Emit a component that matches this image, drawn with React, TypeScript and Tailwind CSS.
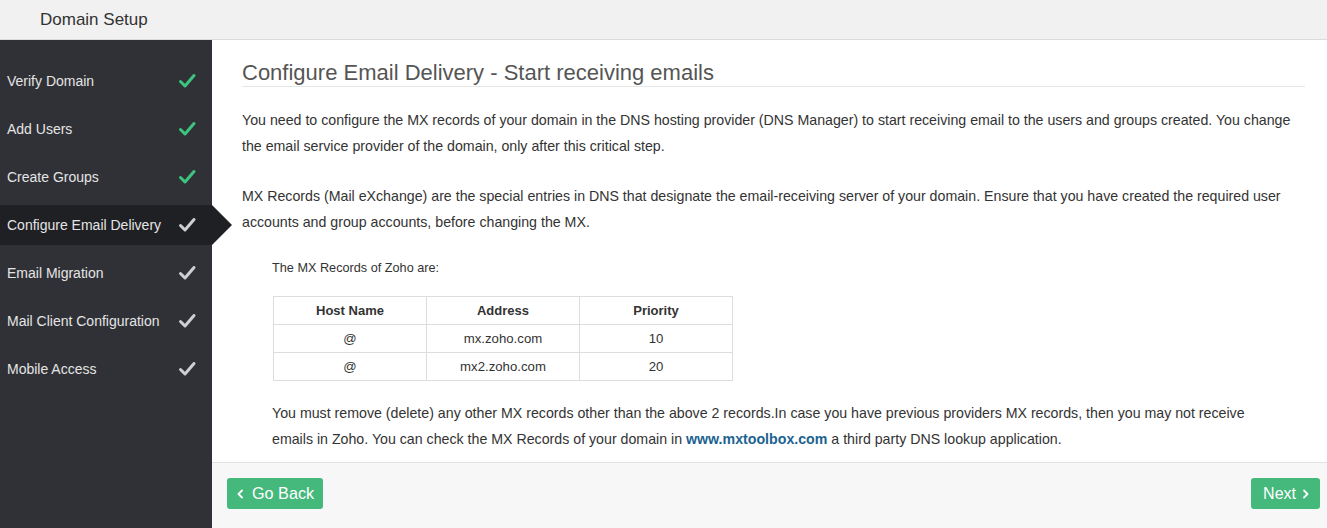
import React from "react"

const steps = [
    { name: 'Verify Domain', done: true },
    { name: 'Add Users', done: true },
    { name: 'Create Groups', done: true },
    { name: 'Configure Email Delivery', done: false, active: true },
    { name: 'Email Migration', done: false },
    { name: 'Mail Client Configuration', done: false },
    { name: 'Mobile Access', done: false },
]

const records = [
    { host: '@', address: 'mx.zoho.com', priority: '10' },
    { host: '@', address: 'mx2.zoho.com', priority: '20' },
]

const CheckIcon = ({ color }: { color: string }) => (
    <svg width="20" height="20" viewBox="0 0 20 20" fill="none">
        <path d="M3.5 10.5 L8 15 L17 4.5" stroke={color} strokeWidth="3" strokeLinecap="round" strokeLinejoin="round" />
    </svg>
)

const Chevron = ({ dir }: { dir: 'left' | 'right' }) => (
    <svg width="8" height="10" viewBox="0 0 8 10" fill="none">
        <path d={dir === 'left' ? 'M6 1.5 L2.5 5 L6 8.5' : 'M2 1.5 L5.5 5 L2 8.5'} stroke="white" strokeWidth="1.8" strokeLinecap="round" strokeLinejoin="round" />
    </svg>
)

const App = () => {
    return (
        <div className="w-[1327px] h-[528px] flex flex-col overflow-hidden bg-white text-[#333]" style={{ fontFamily: '"Liberation Sans", Arial, sans-serif' }}>
            {/* header */}
            <div className="h-[40px] shrink-0 bg-[#f1f1f1] border-b border-[#dcdcdc] flex items-center pl-[40px]">
                <h1 className="text-[17px] text-[#333]">Domain Setup</h1>
            </div>

            <div className="flex flex-1 min-h-0">
                {/* sidebar */}
                <div className="w-[212px] shrink-0 bg-[#303136] pt-[13px]">
                    {steps.map((step) => (
                        <div key={step.name} className={`relative h-[40px] mt-[8px] flex items-center justify-between pl-[7px] pr-[15px] ${step.active ? 'bg-[#1f2024]' : ''}`}>
                            <span className="text-[14px] text-[#e4e4e4]">{step.name}</span>
                            <CheckIcon color={step.done ? '#3cc47c' : '#cfcfd1'} />
                            {step.active && (
                                <span className="absolute left-full top-0 w-0 h-0 border-t-[20px] border-b-[20px] border-l-[20px] border-t-transparent border-b-transparent border-l-[#1f2024]" />
                            )}
                        </div>
                    ))}
                </div>

                {/* main */}
                <div className="flex-1 flex flex-col min-w-0">
                    <div className="flex-1 min-h-0 overflow-hidden pl-[30px] pr-[22px] pt-[20px]">
                        <h2 className="text-[22px] leading-[25px] text-[#555] border-b border-[#e6e6e6] pb-[1px]">Configure Email Delivery - Start receiving emails</h2>

                        <p className="mt-[20px] text-[14.2px] leading-[26px]">
                            You need to configure the MX records of your domain in the DNS hosting provider (DNS Manager) to start receiving email to the users and groups created. You change<br />
                            the email service provider of the domain, only after this critical step.
                        </p>
                        <p className="mt-[24px] text-[14.2px] leading-[26px]">
                            MX Records (Mail eXchange) are the special entries in DNS that designate the email-receiving server of your domain. Ensure that you have created the required user<br />
                            accounts and group accounts, before changing the MX.
                        </p>

                        <div className="pl-[30px]">
                            <p className="mt-[24px] text-[12.7px] leading-[18px]">The MX Records of Zoho are:</p>

                            <table className="mt-[19px] ml-[1px] w-[460px] border-collapse text-[13.2px] text-center table-fixed">
                                <thead>
                                    <tr className="h-[28px]">
                                        <th className="border border-[#dddddd] font-bold text-[13px]">Host Name</th>
                                        <th className="border border-[#dddddd] font-bold text-[13px]">Address</th>
                                        <th className="border border-[#dddddd] font-bold text-[13px]">Priority</th>
                                    </tr>
                                </thead>
                                <tbody>
                                    {records.map((r) => (
                                        <tr key={r.address} className="h-[28px]">
                                            <td className="border border-[#dddddd]">{r.host}</td>
                                            <td className="border border-[#dddddd]">{r.address}</td>
                                            <td className="border border-[#dddddd]">{r.priority}</td>
                                        </tr>
                                    ))}
                                </tbody>
                            </table>

                            <p className="mt-[19px] text-[14.2px] leading-[26px]">
                                You must remove (delete) any other MX records other than the above 2 records.In case you have previous providers MX records, then you may not receive<br />
                                emails in Zoho. You can check the MX Records of your domain in <a className="font-bold text-[#1b6390]">www.mxtoolbox.com</a> a third party DNS lookup application.
                            </p>
                        </div>
                    </div>

                    {/* footer */}
                    <div className="h-[66px] shrink-0 bg-[#f7f7f7] border-t border-[#e2e2e2] flex items-start justify-between pt-[15px] pl-[15px] pr-[7px]">
                        <button className="h-[31px] pl-[9px] pr-[9px] flex items-center gap-[8px] rounded-[3px] bg-[#45b87c] text-white text-[16.2px]">
                            <Chevron dir="left" />
                            <span>Go Back</span>
                        </button>
                        <button className="h-[31px] pl-[12px] pr-[10px] flex items-center gap-[6px] rounded-[3px] bg-[#45b87c] text-white text-[16px]">
                            <span>Next</span>
                            <Chevron dir="right" />
                        </button>
                    </div>
                </div>
            </div>
        </div>
    )
}

export default App
